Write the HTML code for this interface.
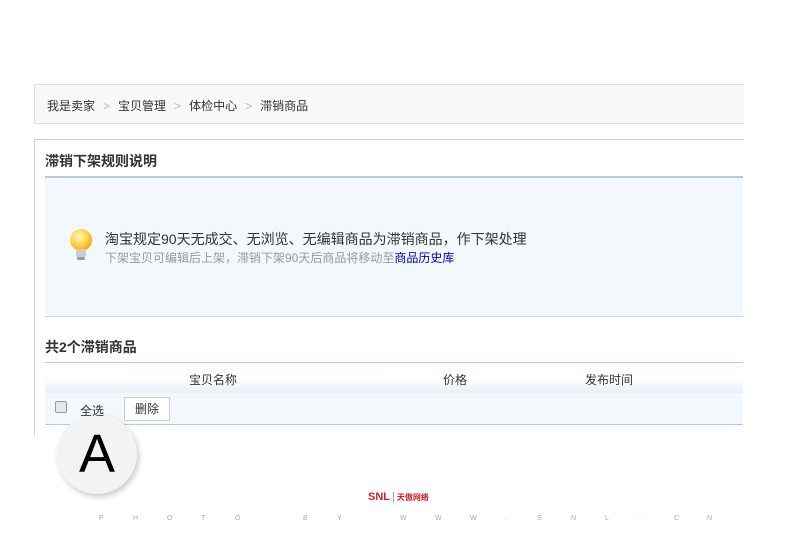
<!DOCTYPE html>
<html><head><meta charset="utf-8"><style>
body{margin:0;width:800px;height:533px;background:#fff;position:relative;overflow:hidden;font-family:"Liberation Sans","Noto Sans CJK SC",sans-serif;font-size:12px;color:#333}
.a{position:absolute}
</style></head><body>
<div class="a" style="left:34px;top:84px;width:709px;height:38px;background:#f8f8f8;border:1px solid #ddd;border-right:none"></div>
<div class="a" style="left:47px;top:97px;font-size:12px;color:#333;white-space:nowrap">我是卖家<span style="color:#bbb;margin:0 8px">&gt;</span>宝贝管理<span style="color:#bbb;margin:0 8px">&gt;</span>体检中心<span style="color:#bbb;margin:0 8px">&gt;</span>滞销商品</div>
<div class="a" style="left:34px;top:139px;width:709px;height:296px;border-left:1px solid #c8d4e0;border-top:1px solid #c8d4e0"></div>
<div class="a" style="left:45px;top:151px;font-size:14px;font-weight:bold;color:#333">滞销下架规则说明</div>
<div class="a" style="left:45px;top:176px;width:698px;height:138px;background:#f3f8fc;border-top:2px solid #b0cde8;border-bottom:1px solid #c8d4e0"></div>
<svg class="a" style="left:67px;top:228px" width="28" height="34" viewBox="0 0 28 34"><defs><radialGradient id="g" cx=".4" cy=".35" r=".7"><stop offset="0" stop-color="#fff8c0"/><stop offset=".6" stop-color="#ffd040"/><stop offset="1" stop-color="#f0a000"/></radialGradient></defs><circle cx="14" cy="12" r="11" fill="url(#g)"/><rect x="9" y="21" width="10" height="8" rx="2" fill="#ccc"/><rect x="10" y="29" width="8" height="3" rx="1" fill="#999"/></svg>
<div class="a" style="left:105px;top:229px;font-size:14px;color:#333;white-space:nowrap">淘宝规定90天无成交、无浏览、无编辑商品为滞销商品，作下架处理</div>
<div class="a" style="left:105px;top:249px;font-size:12px;color:#999;white-space:nowrap">下架宝贝可编辑后上架，滞销下架90天后商品将移动至<span style="color:#00c">商品历史库</span></div>
<div class="a" style="left:45px;top:337px;font-size:14px;font-weight:bold;color:#333">共2个滞销商品</div>
<div class="a" style="left:45px;top:362px;width:698px;height:30px;border-top:1px solid #b0cde8;border-bottom:1px solid #b0cde8;background:linear-gradient(#fff,#fff 50%,#e8f0fb)"></div>
<div class="a" style="left:189px;top:371px;font-size:12px">宝贝名称</div>
<div class="a" style="left:443px;top:371px;font-size:12px">价格</div>
<div class="a" style="left:585px;top:371px;font-size:12px">发布时间</div>
<div class="a" style="left:45px;top:393px;width:698px;height:31px;background:#f3f8fc;border-bottom:1px solid #b0cde8"></div>
<div class="a" style="left:57px;top:414px;width:80px;height:80px;border-radius:50%;background:#f3f3f3;box-shadow:2px 3px 6px rgba(0,0,0,.2);font-size:54px;line-height:80px;text-align:center;color:#000">A</div>
<div class="a" style="left:55px;top:401px;width:10px;height:10px;border:1px solid #999;border-radius:2px;background:#e8e8e8"></div>
<div class="a" style="left:80px;top:402px;font-size:12px">全选</div>
<div class="a" style="left:124px;top:397px;width:44px;height:22px;border:1px solid #ccc;background:#fff;font-size:12px;line-height:22px;text-align:center">删除</div>
<div class="a" style="left:368px;top:491px;font-size:11px;font-weight:bold;color:#d0202a;white-space:nowrap">SNL<span style="font-weight:normal;color:#999;margin:0 2px">|</span><span style="font-size:8px">天傲网络</span></div>
<div class="a" style="left:0;top:515px;font-size:7px;color:#aaa">
<span class="a" style="left:99px">P</span><span class="a" style="left:133px">H</span><span class="a" style="left:167px">O</span><span class="a" style="left:201px">T</span><span class="a" style="left:235px">O</span><span class="a" style="left:303px">B</span><span class="a" style="left:337px">Y</span><span class="a" style="left:400px">W</span><span class="a" style="left:435px">W</span><span class="a" style="left:470px">W</span><span class="a" style="left:505px">.</span><span class="a" style="left:537px">S</span><span class="a" style="left:571px">N</span><span class="a" style="left:605px">L</span><span class="a" style="left:639px">.</span><span class="a" style="left:674px">C</span><span class="a" style="left:707px">N</span>
</div>
</body></html>
